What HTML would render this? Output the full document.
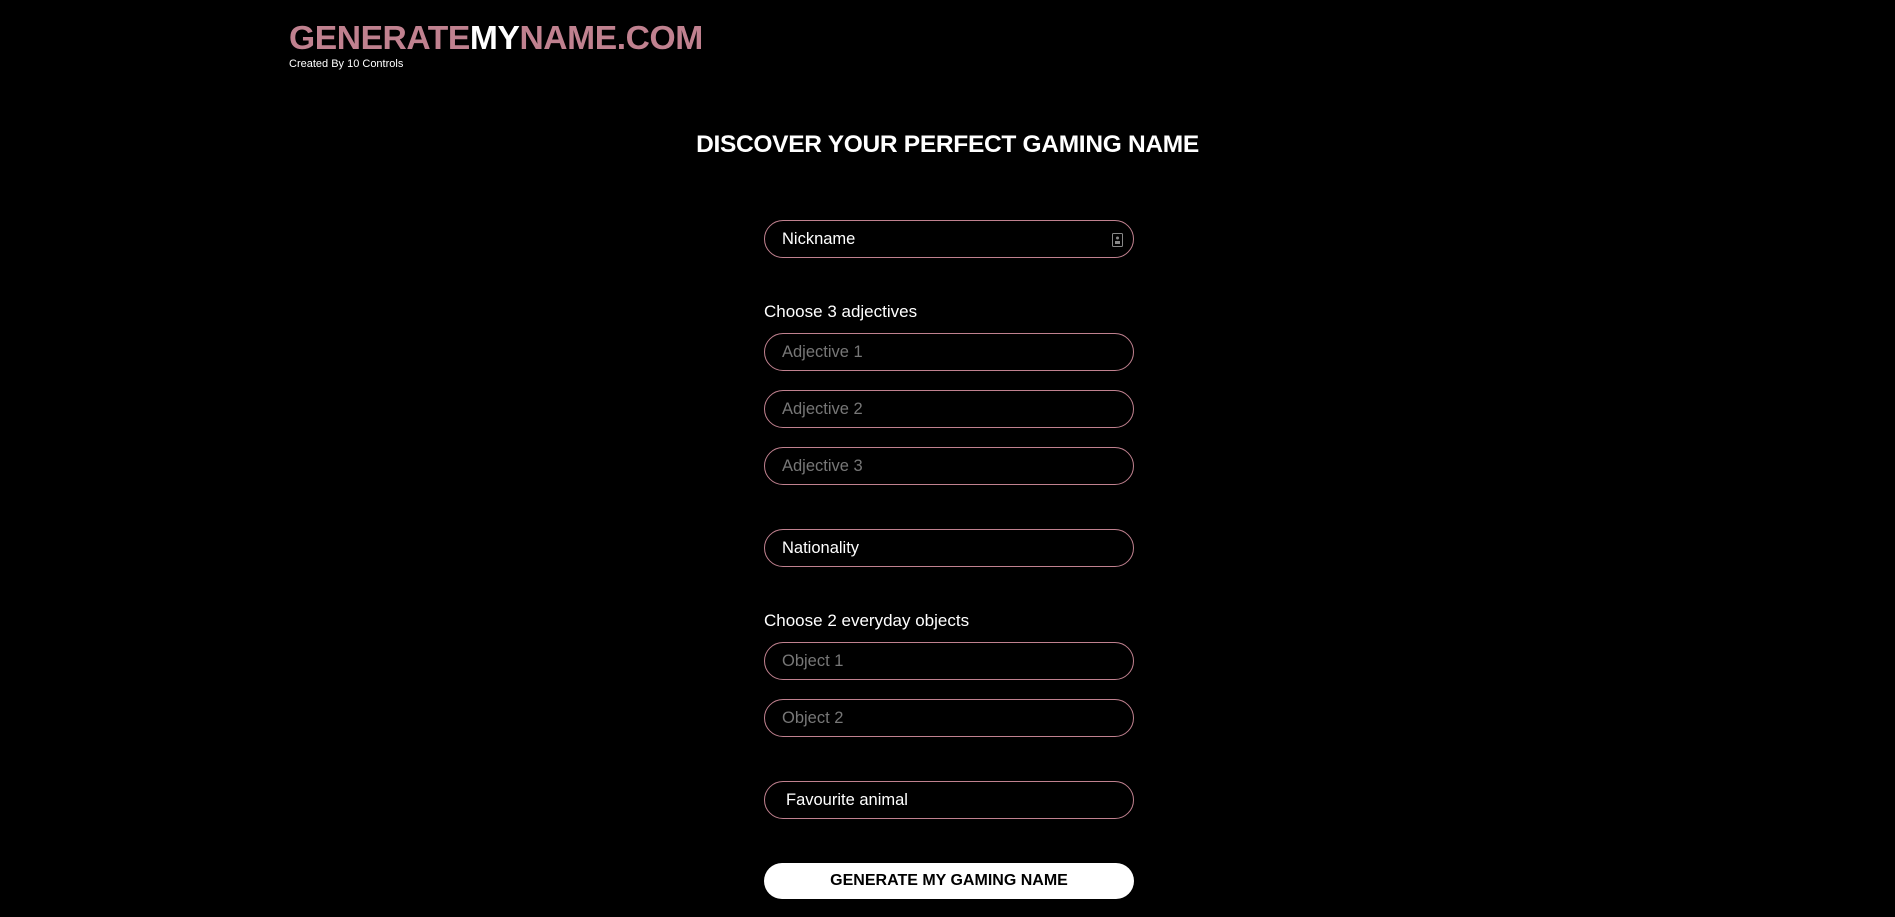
<!DOCTYPE html>
<html><head><style>
body{margin:0;background:#000;width:1895px;height:917px;overflow:hidden;font-family:"Liberation Sans",sans-serif;color:#fff;position:relative}
.logo{position:absolute;left:289px;top:20px;font-size:33.6px;font-weight:bold;color:#c0818f;letter-spacing:-0.4px;white-space:nowrap}
.logo span{color:#fff}
.sub{position:absolute;left:289px;top:58px;font-size:11px}
h1{position:absolute;left:0;width:1895px;text-align:center;top:131px;margin:0;font-size:24.5px;font-weight:bold;letter-spacing:-0.3px}
.in{position:absolute;left:764px;border:1px solid #c0818f;border-radius:19px;font-size:16.5px;line-height:36px;padding-left:17px;box-sizing:border-box;width:370px;height:38px}
.ph{color:#777}
.lb{position:absolute;left:764px;font-size:17px}
.btn{position:absolute;left:764px;top:863px;width:370px;height:36px;background:#fff;border-radius:18px;color:#000;font-weight:bold;font-size:16px;text-align:center;line-height:36px}
</style></head><body>
<div class="logo">GENERATE<span>MY</span>NAME.COM</div>
<div class="sub">Created By 10 Controls</div>
<h1>DISCOVER YOUR PERFECT GAMING NAME</h1>
<div class="in" style="top:220px">Nickname<svg style="position:absolute;right:10px;top:12px" width="11" height="14" viewBox="0 0 11 14"><rect x="0.5" y="0.5" width="10" height="13" rx="1" fill="none" stroke="#888"/><rect x="3" y="8" width="5" height="3" fill="#888"/><circle cx="5.5" cy="5" r="1.5" fill="#888"/></svg></div>
<div class="lb" style="top:302px">Choose 3 adjectives</div>
<div class="in ph" style="top:333px">Adjective 1</div>
<div class="in ph" style="top:390px">Adjective 2</div>
<div class="in ph" style="top:447px">Adjective 3</div>
<div class="in" style="top:529px">Nationality</div>
<div class="lb" style="top:611px">Choose 2 everyday objects</div>
<div class="in ph" style="top:642px">Object 1</div>
<div class="in ph" style="top:699px">Object 2</div>
<div class="in" style="top:781px;padding-left:21px">Favourite animal</div>
<div class="btn">GENERATE MY GAMING NAME</div>
</body></html>
